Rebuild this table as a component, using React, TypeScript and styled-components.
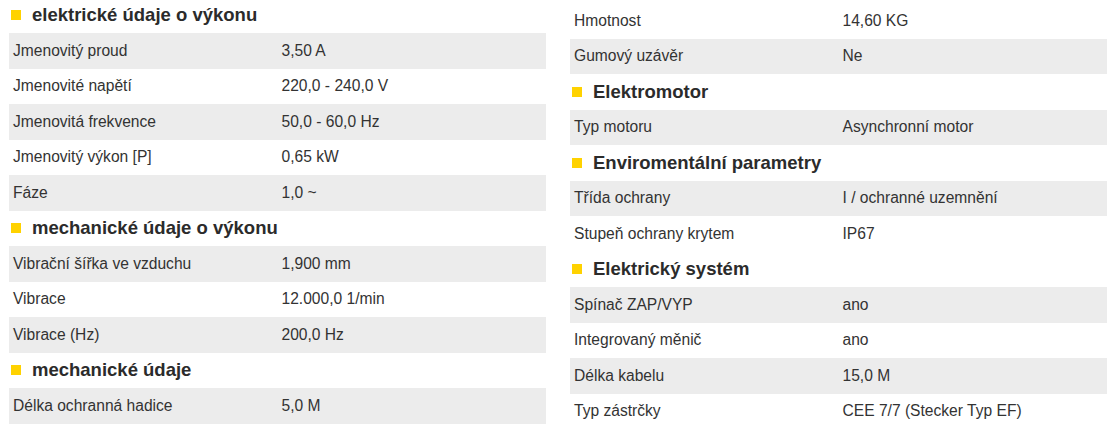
import React from "react";
import styled, { createGlobalStyle } from "styled-components";

const Global = createGlobalStyle`
  html, body { margin: 0; padding: 0; background: #fff; }
  body { font-family: "Liberation Sans", Arial, sans-serif; color: #333; }
`;

const Page = styled.div`
  display: grid;
  grid-template-columns: 537px 537px;
  column-gap: 24px;
  padding-left: 9px;
  margin-top: -2.5px;
  align-items: start;
`;

const Column = styled.div<{ $top?: number }>`
  display: flex;
  flex-direction: column;
  padding-top: ${(p) => p.$top ?? 0}px;
`;

const Heading = styled.div`
  height: 35.5px;
  display: flex;
  align-items: center;
  gap: 11px;
  padding-left: 2px;
  font-size: 18.5px;
  font-weight: 700;
  color: #2b2b2b;
  &::before {
    content: "";
    width: 10px;
    height: 10px;
    background: #ffd200;
    flex: none;
  }
`;

const Row = styled.div<{ $shade: boolean }>`
  display: grid;
  grid-template-columns: 1fr 1fr;
  height: 35.5px;
  background: ${(p) => (p.$shade ? "#ececec" : "#fff")};
`;

const Cell = styled.div`
  display: flex;
  align-items: center;
  padding: 0 4px;
  font-size: 15.6px;
  color: #333;
  white-space: nowrap;
`;

type Section = { title?: string; rows: [string, string][]; startShade?: boolean };

const left: Section[] = [
  {
    title: "elektrické údaje o výkonu",
    rows: [
      ["Jmenovitý proud", "3,50 A"],
      ["Jmenovité napětí", "220,0 - 240,0 V"],
      ["Jmenovitá frekvence", "50,0 - 60,0 Hz"],
      ["Jmenovitý výkon [P]", "0,65 kW"],
      ["Fáze", "1,0 ~"],
    ],
  },
  {
    title: "mechanické údaje o výkonu",
    rows: [
      ["Vibrační šířka ve vzduchu", "1,900 mm"],
      ["Vibrace", "12.000,0 1/min"],
      ["Vibrace (Hz)", "200,0 Hz"],
    ],
  },
  {
    title: "mechanické údaje",
    rows: [["Délka ochranná hadice", "5,0 M"]],
  },
];

const right: Section[] = [
  {
    startShade: false,
    rows: [
      ["Hmotnost", "14,60 KG"],
      ["Gumový uzávěr", "Ne"],
    ],
  },
  {
    title: "Elektromotor",
    rows: [["Typ motoru", "Asynchronní motor"]],
  },
  {
    title: "Enviromentální parametry",
    rows: [
      ["Třída ochrany", "I / ochranné uzemnění"],
      ["Stupeň ochrany krytem", "IP67"],
    ],
  },
  {
    title: "Elektrický systém",
    rows: [
      ["Spínač ZAP/VYP", "ano"],
      ["Integrovaný měnič", "ano"],
      ["Délka kabelu", "15,0 M"],
      ["Typ zástrčky", "CEE 7/7 (Stecker Typ EF)"],
    ],
  },
];

const SectionView = ({ s }: { s: Section }) => {
  const start = s.startShade ?? true;
  return (
    <>
      {s.title && <Heading>{s.title}</Heading>}
      {s.rows.map(([k, v], i) => (
        <Row key={k} $shade={i % 2 === 0 ? start : !start}>
          <Cell>{k}</Cell>
          <Cell>{v}</Cell>
        </Row>
      ))}
    </>
  );
};

export default function App() {
  return (
    <>
      <Global />
      <Page>
        <Column>
          {left.map((s, i) => (
            <SectionView key={i} s={s} />
          ))}
        </Column>
        <Column $top={5.5}>
          {right.map((s, i) => (
            <SectionView key={i} s={s} />
          ))}
        </Column>
      </Page>
    </>
  );
}
